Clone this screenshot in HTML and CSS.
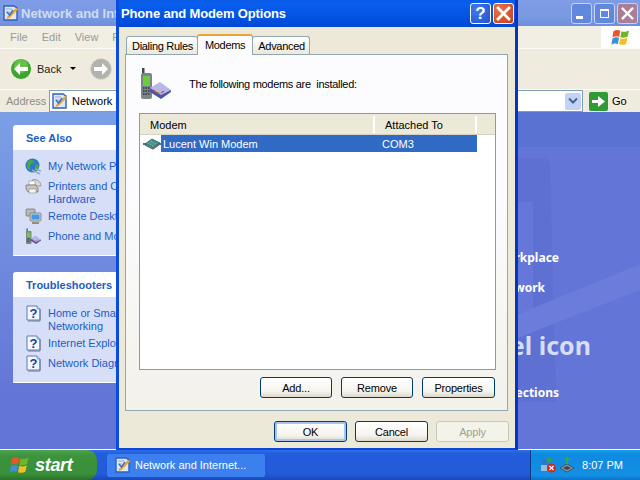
FILE: index.html
```html
<!DOCTYPE html>
<html lang="en">
<head>
<meta charset="utf-8">
<title>Phone and Modem Options</title>
<link rel="stylesheet" href="styles.css">
</head>
<body>
<svg class="sprite" aria-hidden="true">
  <symbol id="flag" viewBox="0 0 20 20">
    <path d="M2 3.500 C5 1.500 7 2 9.300 3 L8 9.500 C6 8.500 4 8.500 1 10Z" fill="#e8562a"/>
    <path d="M10.500 3.400 C13 4.500 15.500 4 18.500 2.500 L17 9 C14 10.500 12 10.500 9.300 9.700Z" fill="#6fb52c"/>
    <path d="M1 11 C4 9.500 6 9.500 7.900 10.500 L6.700 17 C5 16 3 16 -.2 17.500Z" fill="#3d8fdc"/>
    <path d="M9.200 10.800 C12 11.800 14 11.600 16.800 10.200 L15.400 16.800 C13 18 11 18 8 17.200Z" fill="#f6be25"/>
  </symbol>
  <symbol id="folder" viewBox="0 0 16 16">
    <path d="M1 1 H11 L14 3 V15 H1Z" fill="#dfe8f8" stroke="#2c5fc0" stroke-width="1.400"/>
    <path d="M3 4 H9 M3 7 H7" stroke="#8fa9d8"/>
    <path d="M4 12 L13 3 L15.500 4 L6.500 13 L3.500 14Z" fill="#e8a52e"/>
    <path d="M4 7 L6.500 10 L10 5" fill="none" stroke="#2f6fd0" stroke-width="1.400"/>
  </symbol>
  <symbol id="help" viewBox="0 0 17 17">
    <path d="M2 1 H12 L15 4 V15 H2Z" fill="#f3f7ff" stroke="#5b7fae"/>
    <path d="M12 1 V4 H15" fill="#bcd0ee" stroke="#5b7fae" stroke-width=".6"/>
    <path d="M15 4 V16 H3" fill="none" stroke="#6a7a90" stroke-width="1"/>
    <text x="8.500" y="13" class="helpq">?</text>
  </symbol>
  <symbol id="phone" viewBox="0 0 34 34">
    <path d="M3 1 H5.500 V7 H3Z" fill="#3f4a50"/>
    <rect x="2" y="6" width="11" height="26" rx="2" fill="#79858b"/>
    <rect x="4" y="9" width="7" height="10" fill="#6fca3c"/>
    <path d="M4 21 H11 M4 24 H11 M4 27 H11" stroke="#2e3538" stroke-width="1.400" stroke-dasharray="1.500 1"/>
    <path d="M11 21 L21 15 L32 23 L22 31Z" fill="#b9b6e8"/>
    <path d="M11 21 L22 28 L32 23 L32 25 L22 32 L11 25Z" fill="#4d55a8"/>
    <path d="M14 23 L16 24 M17 25 L19 26 M22 26 L25 24" stroke="#d9483a" stroke-width="1.300"/>
    <path d="M19 25.500 L21 26.500" stroke="#58c840" stroke-width="1.300"/>
  </symbol>
  <symbol id="modem" viewBox="0 0 18 12">
    <path d="M0 6 H4 M14 6 H18" stroke="#50708a" stroke-width="2"/>
    <path d="M2 6 L9 1 L17 5 L10 10Z" fill="#3f8d84" stroke="#2c5a70" stroke-width=".8"/>
    <path d="M5 6 L9 3 M7 7 L11 4 M9 8 L13 5" stroke="#9fdcc8" stroke-width=".8" stroke-dasharray="1 1"/>
    <path d="M2 7 L10 11 L17 6" fill="none" stroke="#61686e" stroke-width="1.200"/>
  </symbol>
  <symbol id="globe" viewBox="0 0 17 17">
    <circle cx="7.500" cy="7.500" r="7" fill="#2f79c8"/>
    <path d="M3 3 C6 1 9 2 9 4 C9 6 6 5 5 7 C4 9 6 11 5 13 C2 11 1 6 3 3Z M10 7 C12 6 14 7 14 9 C13 11 11 12 10 11Z" fill="#45ad3c"/>
    <path d="M7 12 L15 16 M10 11 L16 13" stroke="#9aa5c8" stroke-width="1.500"/>
  </symbol>
  <symbol id="printer" viewBox="0 0 17 17">
    <path d="M7 2 A6.500 6.500 0 0 1 16 8 L11 8Z" fill="#d9d7cf" stroke="#80807a" stroke-width=".6"/>
    <rect x="4" y="3" width="6" height="4" fill="#fff" stroke="#8a8a8a" stroke-width=".6"/>
    <path d="M1 7 H11 L13 10 V14 H3 L1 11Z" fill="#c7c7c1" stroke="#6a6a66" stroke-width=".7"/>
    <rect x="4" y="11" width="7" height="4" fill="#f4f4ef" stroke="#7a7a76" stroke-width=".5"/>
  </symbol>
  <symbol id="remote" viewBox="0 0 17 17">
    <rect x="1" y="1" width="9" height="7" rx="1" fill="#b9b9b4" stroke="#6c6c68" stroke-width=".7"/>
    <rect x="5" y="5" width="11" height="8" rx="1" fill="#d1d1ca" stroke="#6c6c68" stroke-width=".7"/>
    <rect x="6.500" y="6.500" width="8" height="5" fill="#3c9be8"/>
    <path d="M7 14 H14 V16 H7Z" fill="#8f8f88"/>
  </symbol>
  <symbol id="bigx" viewBox="0 0 11 11">
    <path d="M1.500 1.500 L9.500 9.500 M9.500 1.500 L1.500 9.500" stroke="#fff" stroke-width="2" stroke-linecap="square" fill="none"/>
  </symbol>
</svg>

<div class="screen">
  <section class="win-back">
    <header class="back-title">
      <svg class="ico16"><use href="#folder"/></svg>
      <span class="back-title-text">Network and Internet Connections</span>
      <span class="back-btns">
        <span class="back-btn"><span class="min-bar"></span></span>
        <span class="back-btn"><span class="restore"></span></span>
        <span class="back-btn back-close"><svg class="x11"><use href="#bigx"/></svg></span>
      </span>
    </header>
    <div class="menubar">
      <span class="menus"><span>File</span><span>Edit</span><span>View</span><span>Favorites</span></span>
      <span class="logo-box"><svg class="logo"><use href="#flag"/></svg></span>
    </div>
    <div class="toolbar">
      <svg class="nav" viewBox="0 0 22 22"><circle cx="11" cy="11" r="10.500" fill="#3fa52f" stroke="#fff" stroke-width=".8"/><circle cx="11" cy="8" r="7" fill="#7fd15c" opacity=".6"/><path d="M4 11 L10 5 V9 H18 V13 H10 V17Z" fill="#fff"/></svg>
      <span class="back-label">Back</span>
      <span class="caret"></span>
      <svg class="nav nav-fwd" viewBox="0 0 22 22"><circle cx="11" cy="11" r="10.500" fill="#b3b3ad" stroke="#d9d9d4"/><path d="M18 11 L12 5 V9 H4 V13 H12 V17Z" fill="#fff"/></svg>
    </div>
    <div class="addressbar">
      <span class="addr-label">Address</span>
      <span class="addr-field">
        <svg class="ico16"><use href="#folder"/></svg>
        <span class="addr-text">Network and Internet Connections</span>
        <span class="combo"><svg viewBox="0 0 10 8" class="combo-arrow"><path d="M1 1.500 L5 5.500 L9 1.500" fill="none" stroke="#4d6185" stroke-width="2"/></svg></span>
      </span>
      <svg class="go" viewBox="0 0 19 19"><rect width="19" height="19" rx="2" fill="#2f9a36"/><path d="M3 8 H9 V4 L16 9.500 L9 15 V11 H3Z" fill="#fff"/></svg>
      <span class="go-label">Go</span>
    </div>
    <div class="back-body">
      <aside class="sidebar">
        <div class="panel panel-see">
          <h2 class="panel-title">See Also</h2>
          <ul class="panel-list">
            <li><svg class="ico17"><use href="#globe"/></svg><span>My Network Places</span></li>
            <li class="two"><svg class="ico17"><use href="#printer"/></svg><span>Printers and Other<br>Hardware</span></li>
            <li><svg class="ico17"><use href="#remote"/></svg><span>Remote Desktop</span></li>
            <li><svg class="ico17"><use href="#phone"/></svg><span>Phone and Modem Options</span></li>
          </ul>
        </div>
        <div class="panel">
          <h2 class="panel-title">Troubleshooters</h2>
          <ul class="panel-list">
            <li class="two"><svg class="ico17"><use href="#help"/></svg><span>Home or Small Office<br>Networking</span></li>
            <li><svg class="ico17"><use href="#help"/></svg><span>Internet Explorer</span></li>
            <li><svg class="ico17"><use href="#help"/></svg><span>Network Diagnostics</span></li>
          </ul>
        </div>
      </aside>
      <main class="content">
        <svg class="watermark" viewBox="0 0 640 340">
          <path d="M400 46 H542 Q549 46 550 54 L556 290 H400Z" fill="#5b6dcd" opacity=".6"/>
          <path d="M400 90 H533 V200 H400Z" fill="#6577d8"/>
          <path d="M518 202 L640 152 V178 L518 226Z" fill="#6b7cda"/>
        </svg>
        <div class="content-band"></div>
        <p class="task t1">Connect to the network at my workplace</p>
        <p class="task t2">Set up or change your home or small office network</p>
        <p class="pick">or pick a Control Panel icon</p>
        <p class="task t3">Network Connections</p>
      </main>
    </div>
  </section>

  <section class="dialog">
    <header class="dlg-title">
      <span class="dlg-title-text">Phone and Modem Options</span>
      <span class="dlg-btns">
        <span class="dlg-btn help-btn">?</span>
        <span class="dlg-btn close-btn"><svg class="x13"><use href="#bigx"/></svg></span>
      </span>
    </header>
    <div class="dlg-client">
      <div class="tabs">
        <span class="tab">Dialing Rules</span>
        <span class="tab tab-on">Modems</span>
        <span class="tab">Advanced</span>
      </div>
      <div class="tabpanel">
        <div class="intro">
          <svg class="intro-ico"><use href="#phone"/></svg>
          <span class="intro-text">The following modems are&nbsp; installed:</span>
        </div>
        <div class="listview">
          <div class="lv-head">
            <span class="lv-col c1">Modem</span>
            <span class="lv-col c2">Attached To</span>
            <span class="lv-col c3"></span>
          </div>
          <div class="lv-row">
            <svg class="lv-ico"><use href="#modem"/></svg>
            <span class="lv-sel"><span class="sel1">Lucent Win Modem</span><span class="sel2">COM3</span></span>
          </div>
        </div>
        <div class="panel-btns">
          <button class="btn">Add...</button>
          <button class="btn">Remove</button>
          <button class="btn btn-wide">Properties</button>
        </div>
      </div>
      <div class="dlg-btnrow">
        <button class="btn btn-wide btn-default">OK</button>
        <button class="btn btn-wide">Cancel</button>
        <button class="btn btn-wide btn-off" disabled>Apply</button>
      </div>
    </div>
  </section>
</div>

<footer class="taskbar">
  <div class="start"><svg class="start-flag"><use href="#flag"/></svg><span class="start-text">start</span></div>
  <div class="task-btn"><svg class="ico16"><use href="#folder"/></svg><span>Network and Internet...</span></div>
  <div class="tray">
    <svg class="tray-ico" viewBox="0 0 16 16"><circle cx="5" cy="5" r="3" fill="#2c78c4"/><circle cx="9" cy="3" r="2.500" fill="#3a9c4d"/><path d="M1 8 H7 V14 H1Z" fill="#9fb9d8"/><circle cx="11.500" cy="11" r="4.500" fill="#d8281c"/><path d="M9.500 9 L13.500 13 M13.500 9 L9.500 13" stroke="#fff" stroke-width="1.300"/></svg>
    <svg class="tray-ico" viewBox="0 0 16 16"><path d="M1 11 L8 7 L15 11 L8 15Z" fill="#8b949c" stroke="#3c4650" stroke-width=".8"/><path d="M4 11 L8 9 L12 11 L8 13Z" fill="#3c4650"/><path d="M7 7 V3 H4 L8 0 L12 3 H9 V7Z" fill="#3aa83c"/></svg>
    <span class="clock">8:07 PM</span>
  </div>
</footer>
</body>
</html>
```
FILE: styles.css
```css
* { box-sizing: border-box; }
html, body { margin: 0; padding: 0; }
body {
  width: 640px; height: 480px; overflow: hidden;
  display: flex; flex-direction: column;
  font-family: "Liberation Sans", Arial, sans-serif;
  font-size: 11px; color: #000;
}
.sprite { display: none; }
.helpq { font: bold 13px "Liberation Sans", sans-serif; fill: #1c3f94; text-anchor: middle; }

.screen { position: relative; width: 640px; height: 450px; overflow: hidden; flex: none; }
.win-back { position: absolute; left: 0; top: 0; width: 640px; height: 450px; display: flex; flex-direction: column; border-bottom: 1px solid #fff; }
.back-title {
  height: 26px; flex: none; display: flex; align-items: center; padding: 0 2px 0 3px;
  background: linear-gradient(#7f9ce6, #7a9ae2 60%, #6f8fdc);
  color: #d0dcf6; font-weight: 700; font-size: 13px;
}
.back-title-text { margin-left: 2px; white-space: nowrap; }
.ico16 { width: 16px; height: 16px; flex: none; }
.back-btns { margin-left: auto; display: flex; gap: 2px; }
.back-btn {
  width: 21px; height: 21px; border: 1px solid #c6d2f0; border-radius: 3px;
  background: #6288de; display: flex; align-items: center; justify-content: center; position: relative;
}
.back-close { background: #a97f98; }
.min-bar { width: 7px; height: 3px; background: #fff; margin: 8px 4px 0 0; }
.restore { width: 9px; height: 9px; border: 1px solid #fff; border-top-width: 2px; }
.x11 { width: 13px; height: 13px; }

.menubar { height: 23px; flex: none; display: flex; background: #f1efe4; border-bottom: 1px solid #fbfaf5; }
.menus { display: flex; padding-left: 10px; gap: 14px; line-height: 23px; color: #9a9a92; }
.logo-box { margin-left: auto; width: 39px; background: #fff; display: flex; align-items: center; justify-content: center; }
.logo { width: 20px; height: 19px; }

.toolbar { height: 41px; flex: none; display: flex; align-items: center; padding: 0 0 1px 10px; background: #efecdf; border-bottom: 1px solid #fbfaf5; }
.nav { width: 22px; height: 22px; flex: none; }
.back-label { margin-left: 5px; color: #222; }
.caret { margin-left: 9px; border: 3px solid transparent; border-top-color: #000; border-bottom: 0; }
.nav-fwd { margin-left: 14px; }

.addressbar { height: 22px; flex: none; display: flex; align-items: center; background: #efecdf; padding-left: 6px; }
.addr-label { width: 43px; color: #8d8d85; }
.addr-field {
  width: 534px; height: 22px; display: flex; align-items: center; background: #fff;
  border: 1px solid #7f9db9; padding: 0 1px 0 2px; gap: 4px;
}
.addr-text { white-space: nowrap; }
.combo { margin-left: auto; width: 16px; height: 17px; background: #c1d3fb; border-radius: 2px; display: flex; align-items: center; justify-content: center; }
.combo-arrow { width: 10px; height: 8px; }
.go { width: 19px; height: 19px; margin-left: 6px; flex: none; }
.go-label { margin-left: 4px; }

.back-body { flex: 1; display: flex; min-height: 0; background: #6375d6; overflow: hidden; }
.sidebar {
  width: 225px; flex: none; padding: 13px 15px 0 13px; display: flex; flex-direction: column; gap: 16px;
  background: linear-gradient(#7ba0e6, #6375d6 85%);
}
.panel { width: 197px; border-bottom: 1px solid #fff; }
.panel-title {
  margin: 0; height: 25px; padding-left: 13px; line-height: 27px; font-size: 11px; font-weight: 700; color: #215dc6;
  background: linear-gradient(90deg, #fff, #fff 60%, #c6d3f7); border-radius: 3px 3px 0 0;
}
.panel-list {
  list-style: none; margin: 0; padding: 10px 10px 12px 12px; background: #d6dff7;
  display: flex; flex-direction: column; gap: 7px;
}
.panel-list li { display: flex; gap: 6px; color: #215dc6; line-height: 13px; white-space: nowrap; }
.panel-list .two { margin-bottom: -3px; }
.ico17 { width: 17px; height: 17px; flex: none; margin: -2px 0; }

.content { flex: 1; position: relative; }
.content-band { height: 35px; background: #5a72d2; position: relative; }
.watermark { position: absolute; left: -225px; top: 0; width: 640px; height: 340px; }
.task, .pick { position: relative; margin: 0; white-space: nowrap; text-align: right; color: #fff; font-weight: 700; font-family: "Noto Sans", sans-serif; }
.task { font-size: 12px; line-height: 16px; padding-right: 81px; }
.t1 { margin-top: 103px; }
.t2 { margin-top: 14px; padding-right: 95px; }
.pick { margin-top: 32px; font-size: 25px; line-height: 34px; color: #d6dff7; padding-right: 49px; }
.t3 { margin-top: 23px; }

.dialog {
  position: absolute; left: 116px; top: 0; width: 402px; height: 451px; display: flex; flex-direction: column;
  background: #0a3fd0; border-left: 3px solid #0a4be0; border-right: 3px solid #0336c0; border-bottom: 3px solid #0a46d8;
}
.dlg-title {
  height: 27px; flex: none; display: flex; align-items: center; padding: 0 1px 0 2px;
  background: linear-gradient(#0a5be6, #0a5fee 15%, #0253e2 60%, #0048d6);
  color: #fff; font-weight: 700; font-size: 13px;
}
.dlg-title-text { letter-spacing: -.15px; }
.dlg-btns { margin-left: auto; display: flex; gap: 2px; }
.dlg-btn {
  width: 21px; height: 21px; border: 1px solid #fff; border-radius: 3px; display: flex; align-items: center; justify-content: center;
  color: #fff; font: bold 17px "Liberation Sans", sans-serif;
}
.help-btn { background: radial-gradient(circle at 30% 30%, #3f7af0, #2452c8); }
.close-btn { background: radial-gradient(circle at 30% 30%, #e8744e, #c83c18); }
.x13 { width: 15px; height: 15px; }

.dlg-client { flex: 1; min-height: 0; background: #ece9d8; padding: 7px 7px 0 6px; display: flex; flex-direction: column; }
.tabs { height: 20px; display: flex; align-items: flex-end; padding-left: 1px; position: relative; z-index: 1; letter-spacing: -.3px; }
.tab {
  height: 18px; padding: 0 4px 0 5px; line-height: 18px; border: 1px solid #91a7b4; border-bottom: 0; border-radius: 3px 3px 0 0;
  background: linear-gradient(#fff, #ece9d8); white-space: nowrap; margin-right: -1px;
}
.tab-on {
  height: 21px; line-height: 18px; padding: 0 7px; background: #fcfcfe; border-color: #e68b2c; border-top: 2px solid #e9a33a; border-left-color: #91a7b4; border-right-color: #91a7b4;
  position: relative; margin-bottom: -1px; z-index: 2;
}
.tabpanel {
  height: 357px; flex: none; border: 1px solid #91a7b4; background: linear-gradient(#fcfcfe, #fcfcfe 40%, #f2f1ea);
  padding: 0 11px 0 13px; display: flex; flex-direction: column;
}
.intro { height: 58px; flex: none; display: flex; align-items: center; }
.intro-text { letter-spacing: -.3px; }
.intro-ico { width: 34px; height: 34px; flex: none; margin-right: 16px; }
.listview { height: 257px; flex: none; border: 1px solid #7f9db9; background: #fff; }
.lv-head { height: 21px; display: flex; background: #ece9d8; border-bottom: 1px solid #d6d2c2; padding-top: 2px; }
.lv-col { padding-left: 10px; line-height: 19px; height: 17px; border-right: 2px solid #fff; }
.c1 { width: 235px; }
.c2 { width: 102px; }
.c3 { flex: 1; border: 0; }
.lv-row { height: 17px; display: flex; align-items: center; padding-left: 3px; }
.lv-ico { width: 18px; height: 12px; flex: none; }
.lv-sel { width: 316px; height: 17px; line-height: 18px; background: #316ac5; color: #fff; display: flex; }
.sel1 { width: 221px; padding-left: 2px; }

.panel-btns { display: flex; justify-content: flex-end; gap: 9px; margin: 7px 1px 0 0; }
.btn {
  width: 72px; height: 21px; padding: 0; border: 1px solid #003c74; border-radius: 3px;
  background: linear-gradient(#fff, #f5f4ee 70%, #dcd8ca);
  font: inherit; color: #000; letter-spacing: -.2px;
}
.btn-wide { width: 73px; }
.dlg-btnrow { display: flex; justify-content: flex-end; gap: 8px; margin: 10px -1px 0 0; }
.btn-default { box-shadow: inset 0 0 0 2px #a9c4ee; }
.btn-off { border-color: #cac8bb; background: #f4f3ea; color: #a1a192; }

.taskbar {
  height: 30px; flex: none; display: flex; align-items: center;
  background: linear-gradient(#2f6ee8, #245ddb 12%, #225ad8 80%, #1a48b8);
}
.start {
  width: 97px; height: 30px; flex: none; display: flex; align-items: center; padding-left: 10px; gap: 5px;
  background: linear-gradient(#4fa24f, #3c933c 20%, #3a8f3a 80%, #2b6f2b); border-radius: 0 10px 10px 0;
}
.start-flag { width: 20px; height: 20px; }
.start-text { color: #fff; font: italic 700 18px "Liberation Sans", sans-serif; letter-spacing: -.3px; }
.task-btn {
  width: 158px; height: 23px; margin-left: 10px; display: flex; align-items: center; gap: 4px; padding-left: 8px;
  background: #3c80f0; border-radius: 2px; color: #fff; white-space: nowrap;
}
.tray {
  margin-left: auto; width: 110px; height: 30px; display: flex; align-items: center; padding: 0 17px 0 9px; gap: 3px;
  background: linear-gradient(#16a0e8, #0e8ae0 15%, #1290e4 85%, #0c70c8); border-left: 1px solid #0e3a88; color: #fff;
}
.tray-ico { width: 16px; height: 16px; flex: none; }
.clock { margin-left: auto; white-space: nowrap; }
```
